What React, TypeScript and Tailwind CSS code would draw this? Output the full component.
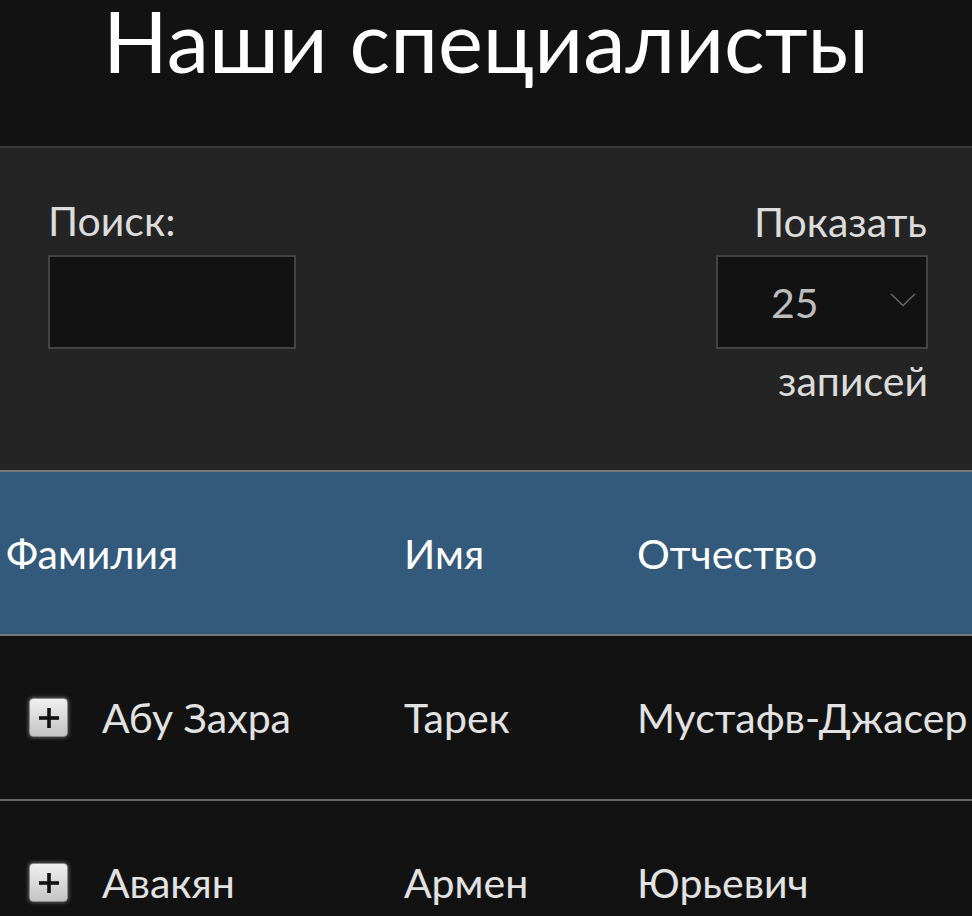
const rows = [
	{ last: "Абу Захра", first: "Тарек", middle: "Мустафв-Джасер" },
	{ last: "Авакян", first: "Армен", middle: "Юрьевич" },
];

function PlusBox() {
	return (
		<div className="w-[39px] h-[39px] shrink-0 rounded-[4px] border border-[#8a8a8a] bg-gradient-to-b from-[#f0f0f0] to-[#c4c4c4] shadow-[0_0_4px_rgba(255,255,255,0.45)] flex items-center justify-center">
			<svg width="24" height="24" viewBox="0 0 24 24">
				<rect x="10.2" y="2" width="3.6" height="20" fill="#111" />
				<rect x="2" y="10.2" width="20" height="3.6" fill="#111" />
			</svg>
		</div>
	);
}

export default function App() {
	return (
		<div className="h-[916px] bg-[#121212] font-['Lato','Noto_Sans',sans-serif] overflow-hidden">
			<div className="h-[148px] border-b-2 border-[#3a3a3a] flex justify-center">
				<h1 className="text-white text-[85px] leading-[80px]">Наши специалисты</h1>
			</div>

			<div className="bg-[#242424] pt-[52px] pb-[69px] pl-[48px] pr-[44px] flex justify-between text-[41px] leading-none text-[#dcdcdc]">
				<div className="flex flex-col gap-[14px]">
					<label>Поиск:</label>
					<div className="w-[248px] h-[94px] bg-[#121212] border-2 border-[#444]" />
				</div>
				<div className="flex flex-col items-end">
					<span className="mt-[1px] mr-[1px]">Показать</span>
					<div className="mt-[13px] w-[212px] h-[94px] bg-[#121212] border-2 border-[#444] flex items-center justify-between pl-[53px] pr-[10px]">
						<span className="text-[#bdbdbd]">25</span>
						<svg width="26" height="14" viewBox="0 0 26 14" className="mt-[-4px]">
							<polyline points="1,1 13,12.5 25,1" fill="none" stroke="#6a6a6a" strokeWidth="1.4" />
						</svg>
					</div>
					<span className="mt-[11px]">записей</span>
				</div>
			</div>

			<div className="border-t-2 border-b-2 border-[#777] bg-[#335a7a] h-[166px] grid grid-cols-[404px_233px_1fr] items-center text-white text-[41px] leading-none">
				<div className="pl-[6px]">Фамилия</div>
				<div>Имя</div>
				<div>Отчество</div>
			</div>

			{rows.map((r) => (
				<div
					key={r.last}
					className="h-[165px] border-b-2 border-[#666] grid grid-cols-[404px_233px_1fr] items-center text-[#e2e2e2] text-[41px] leading-none whitespace-nowrap"
				>
					<div className="pl-[29px] flex items-center gap-[34px]">
						<PlusBox />
						<span>{r.last}</span>
					</div>
					<div>{r.first}</div>
					<div>{r.middle}</div>
				</div>
			))}
		</div>
	);
}
